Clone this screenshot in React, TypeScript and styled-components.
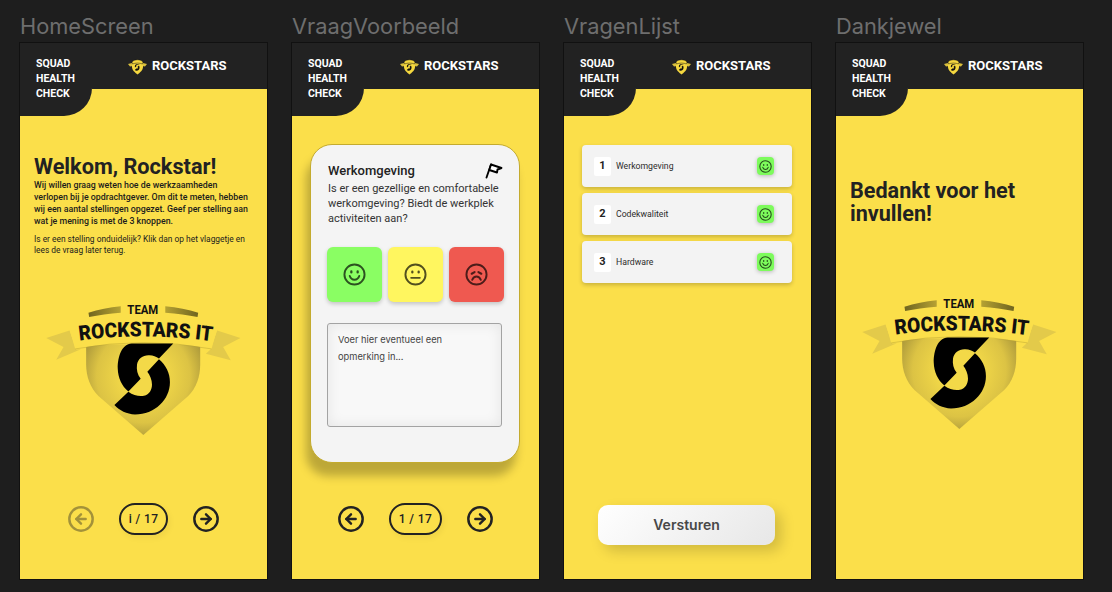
import React from "react";
import styled, { createGlobalStyle } from "styled-components";
import { CircleArrowLeft, CircleArrowRight } from "lucide-react";

const din = `"Roboto", "Liberation Sans", sans-serif`;
const YELLOW = "#fbdf4a";
const DARK = "#222222";

const Global = createGlobalStyle`
  html, body { margin: 0; padding: 0; background: #1e1e1e; overflow: hidden; }
  * { box-sizing: border-box; }
`;

const Canvas = styled.div`
  display: flex;
  gap: 25px;
  width: 1112px;
  height: 592px;
  padding: 14px 0 0 20px;
  background: #1e1e1e;
`;
const FrameColumn = styled.section`
  display: flex;
  flex-direction: column;
  width: 247px;
`;
const FrameLabel = styled.div`
  height: 29px;
  font: 400 21.8px/24px Inter, sans-serif;
  color: #6e6e6e;
  white-space: nowrap;
`;
const Phone = styled.div`
  display: flex;
  flex-direction: column;
  height: 536px;
  background: ${YELLOW};
  outline: 1px solid #111;
  font-family: ${din};
  color: ${DARK};
`;
const Header = styled.header`
  display: flex;
  align-items: flex-start;
  flex: none;
`;
const Tab = styled.div`
  width: 72px;
  height: 73px;
  padding: 13px 0 0 16px;
  background: ${DARK};
  border-bottom-right-radius: 28px;
  font: 700 10.5px/15px ${din};
  color: #fff;
`;
const Band = styled.div`
  flex: 1;
  height: 46px;
  display: flex;
  align-items: center;
  gap: 5px;
  padding: 0 0 0 36px;
  background: ${DARK};
  font: 700 13px/16px ${din};
  color: #fff;
`;
const Body = styled.main`
  flex: 1;
  display: flex;
  flex-direction: column;
  min-height: 0;
`;
const Welcome = styled.div`
  padding: 39px 14px 0;
`;
const ThanksBlock = styled.div`
  padding: 63px 14px 0;
`;
const Title = styled.h1`
  margin: 0;
  font: 700 21.7px/24px ${din};
  color: ${DARK};
`;
const Intro = styled.p`
  margin: 0;
  font: 500 8.8px/12px ${din};
  color: #1c1c1c;
`;
const Hint = styled(Intro)`
  margin-top: 7px;
  font-size: 8.4px;
  line-height: 11px;
  font-weight: 400;
`;
const LogoSlot = styled.div<{ $top: number; $left: number }>`
  margin: ${(p) => p.$top}px 0 0 ${(p) => p.$left}px;
  line-height: 0;
`;
const Nav = styled.nav`
  margin-top: auto;
  margin-bottom: 44px;
  display: flex;
  justify-content: center;
  align-items: center;
  gap: 24px;
`;
const ArrowButton = styled.button<{ $dim?: boolean }>`
  padding: 0;
  border: 0;
  background: none;
  width: 28px;
  height: 28px;
  color: ${DARK};
  opacity: ${(p) => (p.$dim ? 0.4 : 1)};
  line-height: 0;
`;
const Counter = styled.div<{ $w: number }>`
  width: ${(p) => p.$w}px;
  height: 32px;
  display: flex;
  align-items: center;
  justify-content: center;
  border: 2px solid ${DARK};
  border-radius: 16px;
  font: 500 12px/14px ${din};
  letter-spacing: 0.4px;
  box-shadow: 2px 3px 6px rgba(0, 0, 0, 0.05);
`;
const Card = styled.div`
  width: 210px;
  height: 319px;
  margin: 28px 0 0 18px;
  padding: 17px 16px 0 16px;
  background: #f4f4f4;
  border: 1px solid #c4ab2e;
  border-radius: 22px;
  box-shadow: -4px 13px 10px rgba(0, 0, 0, 0.25);
  display: flex;
  flex-direction: column;
`;
const CardHead = styled.div`
  display: flex;
  justify-content: space-between;
  align-items: flex-start;
  padding-left: 1px;
`;
const CardTitle = styled.h2`
  margin: 0;
  font: 500 13px/18px ${din};
  color: ${DARK};
`;
const CardText = styled.p`
  margin: 1px 0 0 1px;
  font: 400 11px/15px ${din};
  color: #333;
`;
const Moods = styled.div`
  display: flex;
  gap: 6px;
  margin-top: 21px;
`;
const Mood = styled.div<{ $bg: string }>`
  width: 55px;
  height: 55px;
  flex: none;
  display: flex;
  align-items: center;
  justify-content: center;
  background: ${(p) => p.$bg};
  border-radius: 6px;
  box-shadow: 0 2px 4px rgba(0, 0, 0, 0.2);
`;
const Note = styled.div`
  width: 175px;
  height: 104px;
  margin-top: 21px;
  padding: 7px 10px;
  border: 1px solid #a3a3a3;
  border-radius: 3px;
  background: #f8f8f8;
  box-shadow: inset 0 0 14px rgba(0, 0, 0, 0.08);
  font: 400 9.3px/17px Inter, sans-serif;
  color: #444;
`;
const List = styled.div`
  display: flex;
  flex-direction: column;
  gap: 6px;
  margin: 29px 0 0 18px;
  width: 210px;
`;
const Row = styled.div`
  height: 42px;
  display: flex;
  align-items: center;
  padding: 0 18px 0 12px;
  background: #f3f3f3;
  border-radius: 4px;
  box-shadow: 0 2px 4px rgba(0, 0, 0, 0.2);
`;
const Num = styled.div`
  width: 17px;
  height: 19px;
  display: flex;
  align-items: center;
  justify-content: center;
  background: #fff;
  border-radius: 2px;
  font: 700 11px/12px ${din};
  color: ${DARK};
`;
const RowLabel = styled.div`
  flex: 1;
  margin-left: 5px;
  font: 400 8.7px/10px ${din};
  color: #2c2c2c;
`;
const Status = styled.div`
  width: 17px;
  height: 18px;
  display: flex;
  align-items: center;
  justify-content: center;
  background: #7dfb5c;
  border-radius: 4px;
  box-shadow: 0 1px 4px rgba(0, 0, 0, 0.25);
`;
const Send = styled.button`
  width: 177px;
  height: 40px;
  margin: auto 0 34px 34px;
  border: 0;
  border-radius: 10px;
  background: linear-gradient(135deg, #ffffff, #e7e7e7);
  box-shadow: 6px 6px 14px rgba(0, 0, 0, 0.17);
  font: 600 14px/16px Inter, sans-serif;
  color: #484848;
`;
const Thanks = styled(Title)`
  font-size: 21.6px;
  line-height: 23px;
`;

function Face({ mood, size, color }: { mood: "happy" | "neutral" | "sad"; size: number; color: string }) {
  return (
    <svg width={size} height={size} viewBox="0 0 24 24" fill="none" stroke={color} strokeWidth="2" strokeLinecap="round">
      <circle cx="12" cy="12" r="10.5" />
      {mood === "happy" && (
        <>
          <path d="M7 13.5c1 2.8 3 4 5 4s4-1.2 5-4" />
          <path d="M8.700 8.800v1M15.300 8.800v1" strokeWidth="2.4" />
        </>
      )}
      {mood === "neutral" && (
        <>
          <path d="M7.500 15.500h9" />
          <path d="M8.700 9v.8M15.300 9v.8" strokeWidth="2.4" />
        </>
      )}
      {mood === "sad" && (
        <>
          <path d="M7.500 17.500c1-2.500 2.800-3.500 4.500-3.500s3.500 1 4.500 3.500" />
          <path d="M7 11.200l3-1.700M17 11.200l-3-1.700" strokeWidth="2.2" />
        </>
      )}
    </svg>
  );
}

function FlagIcon() {
  return (
    <svg width="18" height="18" viewBox="0 0 18 18" fill="none">
      <path d="M1.500 15.500L6 2.500" stroke="#000" strokeWidth="1.900" strokeLinecap="round" />
      <path d="M6 2.500L16.500 6 12.500 7.500 12 10.500 4.300 8z" fill="#fff" stroke="#000" strokeWidth="1.900" strokeLinejoin="round" />
    </svg>
  );
}

const S_UPPER = "M460 187 L335 187 C305 190 293 225 293 262 C294 290 305 315 325 331 L362 293 C352 280 349 265 351 250 C354 232 368 223 385 222 C397 221 408 225 417 232 Z";
const S_LOWER = "M283 372 L325 332 C340 343 358 347 372 344 C388 340 396 326 396 310 C396 296 390 283 382 272 L417 234 C438 252 450 275 450 303 C450 355 405 400 345 400 C320 400 298 388 283 372 Z";

function SmallLogo() {
  return (
    <svg width="19" height="17" viewBox="0 0 19 17">
      <path d="M0 6l4-1 1 3-3 .5zM19 6l-4-1-1 3 3 .5z" fill="#d9bf3c" />
      <path d="M4 4h11v5c0 3-3 5.500-5.500 7.500C7 14.500 4 12 4 9z" fill="#f5d83f" />
      <path d="M4 4C6 1 13 1 15 4L14.500 6C12 4.800 7 4.800 4.500 6z" fill="#f5d83f" stroke="#111" strokeWidth=".5" />
      <path d="M12 6.200H8.300C7 6.500 6.600 8 7 9.500l1.400-1.200c-.3-.6 0-1.200.8-1.200zM6.800 12l1.500-1.500c.8.300 1.600 0 1.600-.8 0-.4-.1-.6-.3-.9l1.300-1.300c.9 1.300 1 3.500-.3 4.500-1.200.9-2.900.8-3.800 0z" fill="#111" />
    </svg>
  );
}

function BigLogo({ id }: { id: string }) {
  return (
    <svg width="197" height="133" viewBox="78 65 591 400">
      <defs>
        <radialGradient id={`${id}-shield`} cx="370" cy="285" r="195" gradientUnits="userSpaceOnUse">
          <stop offset="0.3" stopColor="#f3d948" />
          <stop offset="0.72" stopColor="#dcc344" />
          <stop offset="1" stopColor="#aa973a" />
        </radialGradient>
        <linearGradient id={`${id}-barl`} x1="205" x2="302" y1="0" y2="0" gradientUnits="userSpaceOnUse">
          <stop offset="0" stopColor="#6f6420" />
          <stop offset="1" stopColor="#b6a233" />
        </linearGradient>
        <linearGradient id={`${id}-barr`} x1="535" x2="435" y1="0" y2="0" gradientUnits="userSpaceOnUse">
          <stop offset="0" stopColor="#6f6420" />
          <stop offset="1" stopColor="#b6a233" />
        </linearGradient>
        <path id={`${id}-arc`} d="M178 178 Q370 152 578 180" />
      </defs>
      <path d="M78 170 L148 148 L168 205 L182 204 L108 236 L130 197 Z" fill="#e3ca4a" />
      <path d="M662 170 L592 148 L572 205 L558 218 L633 237 L610 197 Z" fill="#e3ca4a" />
      <path d="M198 190 H541 V250 C541 285 530 320 505 345 L370 462 L235 345 C210 320 198 285 198 250 Z" fill={`url(#${id}-shield)`} />
      <path d="M150 150 Q370 88 590 150 L575 203 Q370 165 165 203 Z" fill={YELLOW} />
      <path d="M165 203 Q370 165 575 203" stroke="#b8a233" strokeWidth="2" fill="none" opacity=".7" />
      <path d="M205 94 Q250 80 302 75 V94 Q250 98 207 107 Z" fill={`url(#${id}-barl)`} />
      <path d="M535 94 Q490 80 436 75 V94 Q490 98 533 107 Z" fill={`url(#${id}-barr)`} />
      <text x="322" y="98" fontFamily="Roboto, sans-serif" fontWeight="700" fontSize="38" fill="#111" textLength="93" lengthAdjust="spacingAndGlyphs">TEAM</text>
      <text fontFamily="Roboto, sans-serif" fontWeight="900" fontSize="62" fill="#111" textLength="400" lengthAdjust="spacingAndGlyphs">
        <textPath href={`#${id}-arc`}>ROCKSTARS IT</textPath>
      </text>
      <path d={S_UPPER} fill="#000" />
      <path d={S_LOWER} fill="#000" />
    </svg>
  );
}

function HeaderBar() {
  return (
    <Header>
      <Tab>
        SQUAD
        <br />
        HEALTH
        <br />
        CHECK
      </Tab>
      <Band>
        <SmallLogo />
        ROCKSTARS
      </Band>
    </Header>
  );
}

function Pager({ label, w, dim }: { label: string; w: number; dim?: boolean }) {
  return (
    <Nav>
      <ArrowButton $dim={dim}>
        <CircleArrowLeft size={28} strokeWidth={2.1} />
      </ArrowButton>
      <Counter $w={w}>{label}</Counter>
      <ArrowButton>
        <CircleArrowRight size={28} strokeWidth={2.1} />
      </ArrowButton>
    </Nav>
  );
}

const rows = ["Werkomgeving", "Codekwaliteit", "Hardware"];

export default function App() {
  return (
    <Canvas>
      <Global />
      <FrameColumn>
        <FrameLabel>HomeScreen</FrameLabel>
        <Phone>
          <HeaderBar />
          <Body>
            <Welcome>
              <Title>Welkom, Rockstar!</Title>
              <Intro>
                Wij willen graag weten hoe de werkzaamheden
                <br />
                verlopen bij je opdrachtgever. Om dit te meten, hebben wij een aantal stellingen opgezet. Geef per stelling aan wat je mening is met de 3 knoppen.
              </Intro>
              <Hint>Is er een stelling onduidelijk? Klik dan op het vlaggetje en lees de vraag later terug.</Hint>
            </Welcome>
            <LogoSlot $top={47} $left={26}>
              <BigLogo id="home" />
            </LogoSlot>
            <Pager label="i / 17" w={49} dim />
          </Body>
        </Phone>
      </FrameColumn>

      <FrameColumn>
        <FrameLabel>VraagVoorbeeld</FrameLabel>
        <Phone>
          <HeaderBar />
          <Body>
            <Card>
              <CardHead>
                <CardTitle>Werkomgeving</CardTitle>
                <FlagIcon />
              </CardHead>
              <CardText>Is er een gezellige en comfortabele werkomgeving? Biedt de werkplek activiteiten aan?</CardText>
              <Moods>
                <Mood $bg="#8afe63"><Face mood="happy" size={23} color="rgba(0,0,0,.68)" /></Mood>
                <Mood $bg="#fff65f"><Face mood="neutral" size={23} color="rgba(0,0,0,.68)" /></Mood>
                <Mood $bg="#ef5950"><Face mood="sad" size={23} color="rgba(0,0,0,.68)" /></Mood>
              </Moods>
              <Note>Voer hier eventueel een opmerking in...</Note>
            </Card>
            <Pager label="1 / 17" w={53} />
          </Body>
        </Phone>
      </FrameColumn>

      <FrameColumn>
        <FrameLabel>VragenLijst</FrameLabel>
        <Phone>
          <HeaderBar />
          <Body>
            <List>
              {rows.map((r, i) => (
                <Row key={r}>
                  <Num>{i + 1}</Num>
                  <RowLabel>{r}</RowLabel>
                  <Status><Face mood="happy" size={13} color="rgba(0,0,0,.7)" /></Status>
                </Row>
              ))}
            </List>
            <Send>Versturen</Send>
          </Body>
        </Phone>
      </FrameColumn>

      <FrameColumn>
        <FrameLabel>Dankjewel</FrameLabel>
        <Phone>
          <HeaderBar />
          <Body>
            <ThanksBlock>
              <Thanks>Bedankt voor het invullen!</Thanks>
            </ThanksBlock>
            <LogoSlot $top={72} $left={26}>
              <BigLogo id="thanks" />
            </LogoSlot>
          </Body>
        </Phone>
      </FrameColumn>
    </Canvas>
  );
}
